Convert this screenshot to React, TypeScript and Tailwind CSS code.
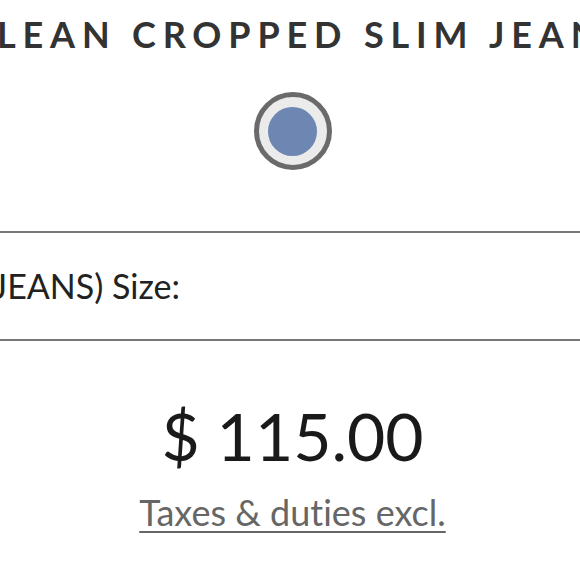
export default function App() {
  return (
    <div className="w-[580px] h-[579px] overflow-hidden bg-white font-['Lato',sans-serif] [font-variant-ligatures:none]">
      {/* product title, clipped on both sides */}
      <div className="pt-[13px] overflow-hidden">
        <div className="whitespace-nowrap ml-[-3px] text-[36px] leading-[43px] font-bold tracking-[0.19em] text-[#333333]">
          LEAN CROPPED SLIM JEANS
        </div>
      </div>

      {/* colour swatch */}
      <div className="mt-[36px] flex justify-center pl-[5px]">
        <div className="w-[78px] h-[78px] rounded-full border-[5px] border-[#6a6a6a] bg-[#ebebeb] flex items-center justify-center">
          <div className="w-[49px] h-[49px] rounded-full bg-[#6e86b2]" />
        </div>
      </div>

      {/* size row */}
      <div className="mt-[61px] border-y-2 border-[#777777] h-[110px] flex items-center">
        <div className="w-[180px] flex justify-end overflow-hidden">
          <span className="shrink-0 whitespace-nowrap text-[34px] leading-[42px] text-[#222222]">
            (LEAN CROPPED SLIM JEANS) Size:
          </span>
        </div>
      </div>

      {/* price */}
      <div className="mt-[55px] flex flex-col items-center pl-[5px]">
        <div className="text-[66px] leading-[79px] text-[#1a1a1a]">$ 115.00</div>
        <a className="mt-[16px] text-[36px] leading-[43px] text-[#666666] underline decoration-2 underline-offset-[5px]">
          Taxes &amp; duties excl.
        </a>
      </div>
    </div>
  );
}
